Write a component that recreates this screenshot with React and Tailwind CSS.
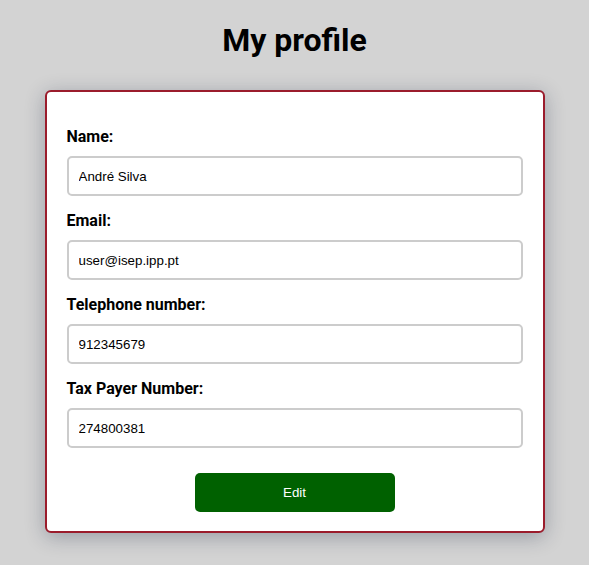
const CAMPOS = [
  { key: "nome", label: "Name:", valor: "André Silva" },
  { key: "email", label: "Email:", valor: "user@isep.ipp.pt" },
  { key: "telefone", label: "Telephone number:", valor: "912345679" },
  { key: "nif", label: "Tax Payer Number:", valor: "274800381" },
];

export default function App() {
  return (
    <div className="min-h-screen bg-[#d3d3d3] font-['Roboto',sans-serif] text-black">
      <h1 className="pt-[21px] text-center text-[32px] font-bold leading-[38px]">
        My profile
      </h1>

      <div className="mx-auto mt-[31px] w-[500px] rounded-[6px] border-2 border-[#9b1c2c] bg-white px-[20px] pb-[19px] pt-[35px] shadow-[0_4px_20px_rgba(20,30,60,0.3)]">
        {CAMPOS.map((campo) => (
          <div key={campo.key} className="mb-[15px]">
            <label className="block text-base font-bold leading-[19px]">
              {campo.label}
            </label>
            <input
              type="text"
              readOnly
              value={campo.valor}
              className="mt-[10px] block h-[40px] w-full rounded-[5px] border-2 border-[#cccccc] px-[10px] font-['Liberation_Sans',Arial,sans-serif] text-[13.33px] text-black outline-none"
            />
          </div>
        ))}

        <div className="flex justify-center pt-[10px]">
          <button
            type="button"
            className="h-[39px] w-[200px] rounded-[5px] bg-[#006100] font-['Liberation_Sans',Arial,sans-serif] text-[13.33px] text-white"
          >
            Edit
          </button>
        </div>
      </div>
    </div>
  );
}
